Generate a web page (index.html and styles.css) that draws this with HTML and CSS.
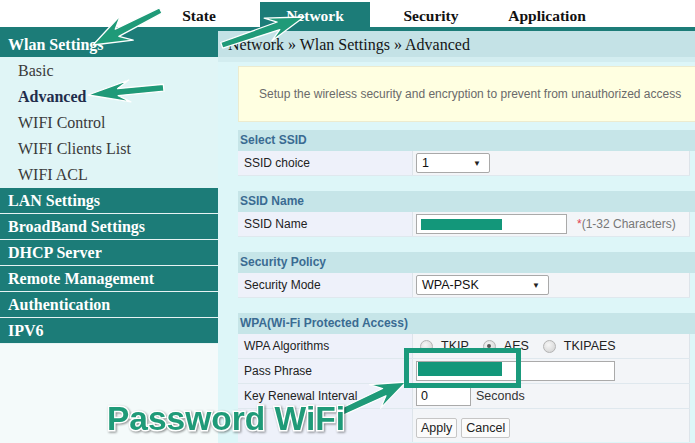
FILE: index.html
```html
<!DOCTYPE html>
<html>
<head>
<meta charset="utf-8">
<link rel="stylesheet" href="styles.css">
</head>
<body>
<div class="page">
  <header class="topnav">
    <nav class="tabs">
      <span class="tab">State</span>
      <span class="tab active">Network</span>
      <span class="tab">Security</span>
      <span class="tab">Application</span>
    </nav>
  </header>
  <div class="layout">
    <aside class="sidebar">
      <div class="menu-head first">Wlan Settings</div>
      <ul class="submenu">
        <li>Basic</li>
        <li class="current">Advanced</li>
        <li>WIFI Control</li>
        <li>WIFI Clients List</li>
        <li>WIFI ACL</li>
      </ul>
      <div class="menu-head">LAN Settings</div>
      <div class="menu-head">BroadBand Settings</div>
      <div class="menu-head">DHCP Server</div>
      <div class="menu-head">Remote Management</div>
      <div class="menu-head">Authentication</div>
      <div class="menu-head">IPV6</div>
    </aside>
    <main class="main">
      <div class="crumb">Network » Wlan Settings » Advanced</div>
      <div class="content">
        <div class="info">Setup the wireless security and encryption to prevent from unauthorized access</div>

        <section class="group">
          <div class="group-head">Select SSID</div>
          <div class="row">
            <div class="label">SSID choice</div>
            <div class="value"><div class="select w74"><span>1</span><span class="caret">▼</span></div></div>
          </div>
        </section>

        <section class="group">
          <div class="group-head">SSID Name</div>
          <div class="row">
            <div class="label">SSID Name</div>
            <div class="value">
              <div class="field w151"><span class="mask m81"></span></div>
              <span class="hint"><span class="req">*</span>(1-32 Characters)</span>
            </div>
          </div>
        </section>

        <section class="group">
          <div class="group-head">Security Policy</div>
          <div class="row">
            <div class="label">Security Mode</div>
            <div class="value"><div class="select w133"><span>WPA-PSK</span><span class="caret">▼</span></div></div>
          </div>
        </section>

        <section class="group">
          <div class="group-head">WPA(Wi-Fi Protected Access)</div>
          <div class="row">
            <div class="label">WPA Algorithms</div>
            <div class="value radios">
              <span class="radio"></span><span class="rtext">TKIP</span>
              <span class="radio checked"></span><span class="rtext">AES</span>
              <span class="radio"></span><span class="rtext">TKIPAES</span>
            </div>
          </div>
          <div class="row">
            <div class="label">Pass Phrase</div>
            <div class="value"><div class="field w199 top"><span class="mask m84"></span></div></div>
          </div>
          <div class="row">
            <div class="label">Key Renewal Interval</div>
            <div class="value"><div class="field w55"><span class="num">0</span></div><span class="unit">Seconds</span></div>
          </div>
          <div class="row buttons">
            <div class="label"></div>
            <div class="value"><span class="btn">Apply</span><span class="btn">Cancel</span></div>
          </div>
        </section>
      </div>
    </main>
  </div>

  <svg class="annot" width="695" height="443" viewBox="0 0 695 443">
    <g class="arrow">
      <path transform="translate(93,45) rotate(153)" d="M0,0 L-38,-14 L-27,-4 L-76,-3 L-76,3 L-27,4 L-38,14 Z"/>
      <path transform="translate(304,17) rotate(-19)" d="M0,0 L-38,-12 L-27,-4 L-87,-3 L-87,3 L-27,4 L-38,12 Z"/>
      <path transform="translate(88,95) rotate(174.5)" d="M0,0 L-42,-11 L-30,-3.5 L-76,-3.5 L-76,3.5 L-30,3.5 L-42,11 Z"/>
      <path transform="translate(406,382) rotate(-25)" d="M0,0 L-34,-13 L-24,-4 L-72,-3.5 L-72,3.5 L-24,4 L-34,13 Z"/>
    </g>
    <rect class="hl" x="406.5" y="350.5" width="112" height="35"/>
    <text class="pw" x="107" y="430" textLength="238" lengthAdjust="spacingAndGlyphs">Password WiFi</text>
  </svg>
</div>
</body>
</html>
```

FILE: styles.css
```css
* { box-sizing: border-box; }
html, body { margin: 0; padding: 0; }
body {
  width: 695px;
  height: 443px;
  overflow: hidden;
  background: #f4fafa;
  font-family: "Liberation Sans", Arial, sans-serif;
}
.page { position: relative; width: 695px; height: 443px; overflow: hidden; }

.topnav { height: 27px; background: #ffffff; }
.tabs { display: flex; gap: 6px; padding-left: 144px; height: 27px; align-items: flex-end; }
.tab {
  width: 110px;
  height: 25px;
  padding-top: 4px;
  line-height: 20px;
  text-align: center;
  font-family: "Liberation Serif", "Times New Roman", serif;
  font-weight: bold;
  font-size: 15.5px;
  color: #111;
}
.tab.active { background: #1c7c78; color: #ffffff; }

.layout { display: flex; height: 416px; }
.sidebar { width: 218px; flex: none; background: #f4fafa; }
.menu-head {
  height: 26px;
  line-height: 25px;
  padding-left: 8px;
  background: #1c7c78;
  border-bottom: 1px solid #e6f3f3;
  color: #fff;
  font-family: "Liberation Serif", "Times New Roman", serif;
  font-weight: bold;
  font-size: 16px;
}
.menu-head.first { height: 30px; padding-top: 6px; line-height: 24px; border-bottom: 0; }
.submenu {
  list-style: none;
  margin: 0;
  padding: 1px 0 0 18px;
  background: #e0f5f6;
  font-family: "Liberation Serif", "Times New Roman", serif;
  font-size: 16px;
  color: #3a3a3a;
}
.submenu li { height: 26px; line-height: 26px; }
.submenu li.current { font-weight: bold; color: #1f2d4c; }

.main { flex: 1; background: #ddf6f8; min-width: 0; }
.crumb {
  height: 30px;
  border-top: 4px solid #1c7c78;
  background: #c4e2e6;
  padding: 1px 0 0 10px;
  line-height: 25px;
  font-family: "Liberation Serif", "Times New Roman", serif;
  font-size: 16px;
  color: #151515;
}
.content {
  padding: 9px 0 0 20px;
  background: linear-gradient(#d3edf0 0, #d3edf0 5px, #ddf6f8 5px);
}
.info {
  height: 56px;
  line-height: 54px;
  padding-left: 20px;
  background: #ffffe1;
  border: 1px solid #ecebcf;
  border-right: 0;
  font-size: 12px;
  color: #6a6a6a;
  white-space: nowrap;
}
.group { margin-top: 15px; }
.info + .group { margin-top: 8px; }
.group-head {
  height: 21px;
  line-height: 21px;
  padding-left: 2px;
  background: #c6e5e8;
  font-size: 12px;
  font-weight: bold;
  color: #3a6b92;
}
.row {
  display: flex;
  height: 25px;
  margin-right: 5px;
  border-bottom: 1px solid #dfe8ee;
  font-size: 12px;
  color: #222;
}
.label {
  width: 175px;
  flex: none;
  padding-left: 6px;
  line-height: 24px;
  background: #eef1fa;
  border-right: 1px solid #dde4ea;
}
.value {
  flex: 1;
  display: flex;
  align-items: center;
  padding-left: 3px;
  background: #f3f5f8;
  border-right: 1px solid #dde4ea;
}
.select {
  height: 20px;
  display: flex;
  align-items: center;
  justify-content: space-between;
  padding: 0 8px 0 5px;
  background: #fff;
  border: 1px solid #a9a9a9;
  border-radius: 2px;
  font-size: 12.5px;
  color: #111;
}
.caret { font-size: 8px; color: #222; }
.w74 { width: 74px; }
.w133 { width: 133px; }
.field {
  height: 20px;
  background: #fff;
  border: 1px solid #aaaaaa;
  display: flex;
  align-items: center;
  padding-left: 4px;
}
.field.top { align-items: flex-start; padding-left: 1px; }
.w151 { width: 151px; }
.w199 { width: 199px; }
.w55 { width: 55px; }
.mask { display: block; background: #13977a; }
.m81 { width: 81px; height: 11px; }
.m84 { width: 84px; height: 14px; }
.num { font-size: 12.5px; color: #111; }
.hint { margin-left: 10px; color: #777; font-size: 12px; }
.req { color: #e0404f; }
.unit { margin-left: 5px; color: #333; font-size: 12.5px; }

.radios { padding-left: 7px; }
.radio {
  width: 13px;
  height: 13px;
  border-radius: 50%;
  border: 1px solid #b4b4b4;
  background: radial-gradient(circle at 40% 35%, #f6f6f6, #cfcfcf);
  margin-right: 8px;
  position: relative;
}
.radio.checked::after {
  content: "";
  position: absolute;
  left: 3.5px; top: 3.5px;
  width: 4px; height: 4px;
  border-radius: 50%;
  background: #555;
}
.rtext { margin-right: 14px; font-size: 12.5px; color: #222; }

.row.buttons { height: 33px; border-bottom: 0; }
.row.buttons .value { align-items: flex-start; padding-top: 9px; }
.btn {
  height: 20px;
  line-height: 18px;
  padding: 0 4px;
  margin-right: 4px;
  background: #fbfbfb;
  border: 1px solid #c6c6c6;
  border-radius: 2px;
  font-size: 12.5px;
  color: #222;
}

.annot { position: absolute; left: 0; top: 0; pointer-events: none; }
.arrow path { fill: #1f9a78; stroke: #ffffff; stroke-width: 1.3; stroke-linejoin: round; }
.hl { fill: none; stroke: #1a9a7c; stroke-width: 5; }
.pw {
  font-family: "Liberation Sans", Arial, sans-serif;
  font-weight: bold;
  font-size: 34px;
  fill: #1f9a78;
  stroke: #ffffff;
  stroke-width: 3px;
  paint-order: stroke;
  filter: drop-shadow(1px 1px 1px rgba(0,0,0,0.45));
}
```
